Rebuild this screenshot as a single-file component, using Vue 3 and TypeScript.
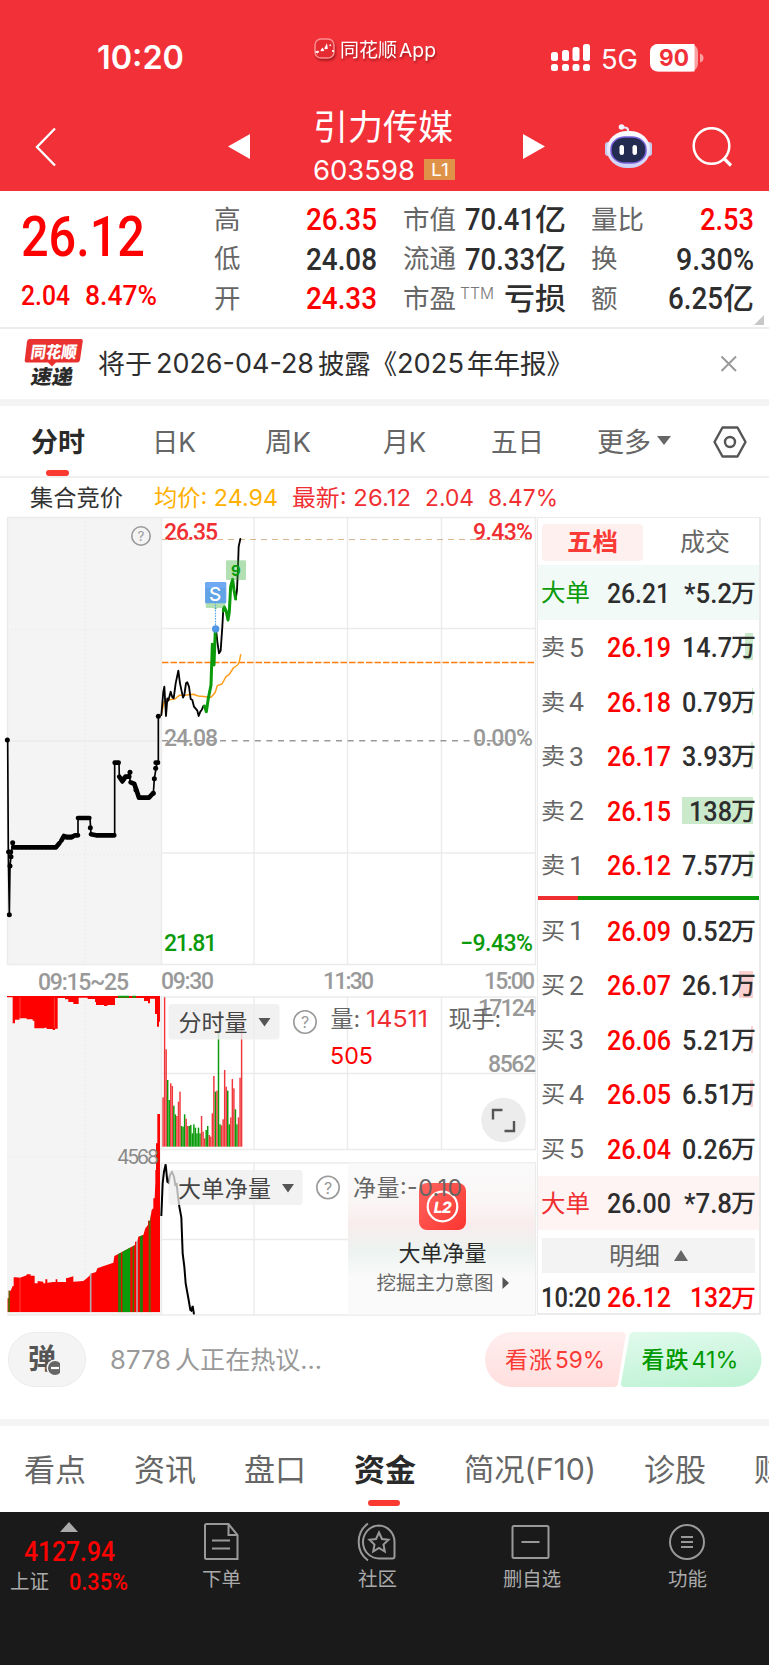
<script setup lang="ts">
import { h } from 'vue'

interface FitProps { t: string; w: number | string; s: number | string }

// One line of text set to an exact advance width, centred on its box.
const Fit = (p: FitProps) =>
  h('svg', { class: 'fit', width: p.w, height: p.s }, [
    h('text', { x: 0, y: Number(p.s) * 0.87, 'font-size': p.s, textLength: p.w, lengthAdjust: 'spacingAndGlyphs' }, p.t),
  ])
Fit.props = ['t', 'w', 's']

const quotes = [
  [{ l: '高', v: '26.35', w: 71, up: true }, { l: '市值', v: '70.41', w: 70, u: '亿', uw: 31 }, { l: '量比', v: '2.53', w: 54, up: true }],
  [{ l: '低', v: '24.08', w: 71 }, { l: '流通', v: '70.33', w: 70, u: '亿', uw: 31 }, { l: '换', v: '9.30%', w: 78 }],
  [{ l: '开', v: '24.33', w: 71, up: true }, { l: '市盈', v: '', w: 0, u: '亏损', uw: 62, ttm: true }, { l: '额', v: '6.25', w: 55, u: '亿', uw: 31 }],
] as { l: string; v: string; w: number; up?: boolean; u?: string; uw?: number; ttm?: boolean }[][]

const asks = [
  { n: '5', p: '26.19', q: '14.7', b: 8 },
  { n: '4', p: '26.18', q: '0.79', b: 1 },
  { n: '3', p: '26.17', q: '3.93', b: 2 },
  { n: '2', p: '26.15', q: '138', b: 71 },
  { n: '1', p: '26.12', q: '7.57', b: 4 },
]
const bids = [
  { n: '1', p: '26.09', q: '0.52', b: 0 },
  { n: '2', p: '26.07', q: '26.1', b: 14 },
  { n: '3', p: '26.06', q: '5.21', b: 2 },
  { n: '4', p: '26.05', q: '6.51', b: 3 },
  { n: '5', p: '26.04', q: '0.26', b: 0 },
]
const qw = (q: string) => (q.length === 4 ? 50 : 43)

const volume = (
  '352r 52r 208r 300g 360g 310r 318r 377g 403g 408r 365r 335r 438g 440g 403g 416r 438r 438g 435g 460g 433g 443g 460g 443g 460g 408r 455r 475r 450g 438g 465r 470r 400r 288r 335g 332r 155g 433g 436r 418r 270r 320r 332g 433g 412r 297r 325r 388g 433g 412r 293r 120r'
).split(' ').map((s, i) => ({ x: 487 + i * 4.62, y: parseInt(s), c: s.endsWith('g') ? '#0a9a0a' : '#f0383c' }))

const dots = [[22, 690], [28, 1214], [30, 1068], [33, 1040], [28, 1026], [38, 998], [271, 953], [463, 806], [467, 775], [475, 619], [390, 787], [460, 850], [408, 840]]
</script>

<template>
  <div class="page">
    <header class="top">
      <div class="status">
        <Fit class="clock" t="10:20" w="87" s="32.500" />
        <div class="brand">
          <svg width="22" height="22" viewBox="0 0 22 22"><rect x="1" y="1" width="19" height="19" rx="6" fill="#e52b31" stroke="#ff8d90" stroke-width="1.500" /><path d="M1.500 13.500l2 1 1-1.500M7 13l1.500-2 1 2M11 11l1.500-3 .5 3M15.500 7.500l1.500-.5M19 12v2" stroke="#fff" stroke-width="1.700" fill="none" /></svg>
          <Fit t="同花顺" w="57" s="19" /><Fit t="App" w="37" s="19" />
        </div>
        <svg class="signal" width="40" height="28" viewBox="0 0 40 28" fill="#fff"><rect x="0" y="8" width="7" height="9" rx="2.5" /><rect x="11" y="6" width="7" height="11" rx="2.5" /><rect x="21.500" y="3" width="7" height="14" rx="2.500" /><rect x="32" y="0" width="7" height="17" rx="2.500" /><rect x="0" y="20" width="7" height="7" rx="2.500" /><rect x="11" y="20" width="7" height="7" rx="2.500" /><rect x="21.500" y="20" width="7" height="7" rx="2.500" /><rect x="32" y="20" width="7" height="7" rx="2.500" /></svg>
        <Fit class="net" t="5G" w="37" s="27" />
        <svg class="battery" width="55" height="28" viewBox="0 0 55 28"><rect width="48" height="27.500" rx="8" fill="#f9a0a3" /><path d="M8 0h36.500v27.500H8a8 8 0 0 1-8-8V8a8 8 0 0 1 8-8z" fill="#fff" /><path d="M50 9.500q3.500 1 3.500 4.500t-3.500 4.500z" fill="#f9a0a3" /><text x="9" y="21.700" font-size="22.500" font-weight="700" textLength="30" lengthAdjust="spacingAndGlyphs" fill="#f03038">90</text></svg>
      </div>
      <div class="titlebar">
        <svg class="back" width="24" height="40" viewBox="0 0 24 40"><path d="M21 1.500L3 20l18 18.500" stroke="#fff" stroke-width="2.400" fill="none" /></svg>
        <svg class="prev" width="22" height="26"><path d="M0 12.500L22 0v25z" fill="#fff" /></svg>
        <div class="name">
          <Fit t="引力传媒" w="140" s="35" />
          <div class="code"><Fit t="603598" w="102" s="27.500" /><span class="lv"><Fit t="L1" w="18" s="17" /></span></div>
        </div>
        <svg class="next" width="22" height="26"><path d="M22 12.500L0 0v25z" fill="#fff" /></svg>
        <svg class="robot" width="48" height="46" viewBox="0 0 48 46">
          <defs><linearGradient id="rb" x2="0" y2="1"><stop offset="0" stop-color="#fff" /><stop offset="1" stop-color="#cdd0f6" /></linearGradient></defs>
          <path d="M23 9V7q0-2.500-4-2.500" stroke="#e8e9fb" stroke-width="2.200" fill="none" /><circle cx="16.500" cy="4" r="2.800" fill="#f2f3ff" />
          <rect x="0" y="19" width="6" height="14" rx="3" fill="#c6cbee" /><rect x="41" y="19" width="6" height="14" rx="3" fill="#c6cbee" />
          <rect x="2" y="8" width="43" height="37" rx="20" ry="18" fill="url(#rb)" />
          <rect x="6" y="14" width="35" height="26" rx="14" ry="12" fill="#232b50" stroke="#7a62dc" stroke-width="1.500" />
          <rect x="14.500" y="22" width="4.500" height="10" rx="2.200" fill="#fff" /><rect x="27.500" y="22" width="4.500" height="10" rx="2.200" fill="#fff" />
        </svg>
        <svg class="search" width="42" height="42" viewBox="0 0 42 42" fill="none" stroke="#fff" stroke-width="2.500"><circle cx="19.500" cy="19" r="17.800" /><path d="M31.500 31l7.500 7.500" stroke-width="3.200" /></svg>
      </div>
    </header>

    <section class="quote">
      <div class="last">
        <Fit class="din big" t="26.12" w="124" s="56" />
        <div class="chg"><Fit class="din" t="2.04" w="49" s="28.500" /><Fit class="din" t="8.47%" w="72" s="28.500" /></div>
      </div>
      <div class="qgrid">
        <template v-for="(row, i) in quotes" :key="i">
          <div v-for="c in row" :key="c.l" class="cell">
            <Fit class="lab" :t="c.l" :w="c.l.length * 26.5" s="26" />
            <Fit v-if="c.ttm" class="ttm" t="TTM" w="34" s="16" />
            <i class="grow"></i>
            <Fit v-if="c.v" class="din" :class="{ up: c.up }" :t="c.v" :w="c.w" s="31.500" />
            <Fit v-if="c.u" class="unit" :t="c.u" :w="c.uw!" s="30" />
          </div>
        </template>
      </div>
      <svg class="corner" width="10" height="10"><path d="M10 0v10H0z" fill="#c8c8c8" /></svg>
    </section>

    <section class="news">
      <svg width="60" height="50" viewBox="0 0 60 50">
        <path d="M5.500 1H57q2 0 1.800 2L56 22q-.5 2.500-3 2.500H32l-4 4-4-4H2.500Q.500 24.500.700 22.500L3 3.500Q3.400 1 5.500 1z" fill="#e9322f" />
        <text transform="translate(6 19.500) skewX(-8)" font-size="16.500" font-weight="900" textLength="46" lengthAdjust="spacingAndGlyphs" fill="#fff">同花顺</text>
        <text transform="translate(6 46) skewX(-10)" font-size="20" font-weight="900" textLength="42" lengthAdjust="spacingAndGlyphs" fill="#2a2a2a">速递</text>
      </svg>
      <Fit class="ntext a" t="将于" w="54" s="27" /><Fit class="ntext b" t="2026-04-28" w="158" s="26.500" /><Fit class="ntext b" t="披露《" w="79" s="27" /><Fit class="ntext" t="2025" w="67" s="26.500" /><Fit class="ntext c" t="年年报》" w="106" s="27" />
      <svg class="close" width="18" height="18" stroke="#999" stroke-width="2"><path d="M1.500 1.500l14.500 14.500M16 1.500L1.500 16" /></svg>
    </section>

    <nav class="tabs">
      <div class="on"><Fit t="分时" w="54" s="27.500" /><u></u></div>
      <Fit t="日K" w="44" s="27" /><Fit t="周K" w="46" s="27" /><Fit t="月K" w="43" s="27" /><Fit t="五日" w="53" s="27" />
      <span class="more"><Fit t="更多" w="54" s="27" /><svg width="14" height="9"><path d="M0 0h14L7 9z" fill="#666" /></svg></span>
      <svg width="36" height="34" viewBox="0 0 36 34" fill="none" stroke="#555" stroke-width="2.400" stroke-linejoin="round"><path d="M10.500 2.500h15L33.500 17l-8 14.500h-15L2.500 17z" /><circle cx="18" cy="17" r="5" /></svg>
    </nav>

    <div class="info">
      <Fit t="集合竞价" w="93" s="23" /><Fit class="avg" t="均价: 24.94" w="124" s="23" /><Fit class="red" t="最新: 26.12" w="119" s="23" /><Fit class="red" t="2.04" w="49" s="23" /><Fit class="red" t="8.47%" w="70" s="23" />
    </div>

    <main class="trade">
      <svg class="charts" width="537" height="806" viewBox="0 514 537 806">
        <defs>
          <clipPath id="auc"><path d="M22 997V955L26 955V932H32L38 918H41V892H48L60 893L80 886V883H92V887H104V910H113V903L130 905V910H136V898H142V908L160 906H167V898H172V906H198V895L205 893L220 889V905L250 903L262 893L270 886V882L288 876L292 865L320 855L340 848L343 828L355 822L405 795V785H412L415 770L430 765L436 745L444 735V722H450L455 690L460 685V655H464L466 610V570H468V490H472V402H480V997z" /></clipPath>
          <linearGradient id="ad" x2="0" y2="1"><stop offset="0" stop-color="#fafafa" /><stop offset=".25" stop-color="#faf6f6" /><stop offset=".4" stop-color="#f9eced" /><stop offset=".47" stop-color="#f3efef" /><stop offset=".58" stop-color="#edf3f0" /><stop offset=".75" stop-color="#f9faf9" /><stop offset="1" stop-color="#fafafa" /></linearGradient>
          <linearGradient id="l2" x2="1" y2="1"><stop offset="0" stop-color="#ff6560" /><stop offset="1" stop-color="#fb3530" /></linearGradient>
        </defs>
        <rect x="7" y="517" width="154" height="448" fill="#f4f4f4" /><rect x="7" y="996" width="154" height="319" fill="#f4f4f4" />
        <g stroke="#ebebeb" stroke-width="1.400" fill="none">
          <path d="M7 517.500H536M161.500 517V964.500H535.500V517M254 517v447M347.500 517v447M441.500 517v447M161 628.500H535M161 853H535M7 964.500h154M7.500 517v448" />
          <path d="M161.500 997H535.500V1149.500H161.500zM254 997v152M347.500 997v152M441.500 997v152M161 1073.500h374M161.500 1163H535.500V1315H161.500zM254 1163v152M161 1239.500h187M7 1315h154" />
          <path d="M7 629.500h154M7 854.500h154M85 517v448M85 996v319M7 1157h154" stroke-dasharray="1.500 2.500" /><path d="M7 741h154" />
        </g>
        <g fill="#999" class="dinax">
          <text x="161" y="988.500" textLength="53">09:30</text><text x="323" y="988.500" textLength="51">11:30</text><text x="484" y="988.500" textLength="51">15:00</text><text x="38" y="989.500" textLength="91">09:15~25</text>
        </g>
        <g class="dinax">
          <text x="164" y="539.500" textLength="54" fill="#f02f33">26.35</text><text x="473" y="539.500" textLength="60" fill="#f02f33">9.43%</text>
          <text x="164" y="745.500" textLength="54" fill="#999">24.08</text><text x="473" y="745.500" textLength="60" fill="#999">0.00%</text>
          <text x="164" y="951" textLength="53" fill="#0a9a0a">21.81</text><text x="460" y="951" textLength="73" fill="#0a9a0a">−9.43%</text>
        </g>
        <g fill="none">
          <path d="M162 539.500h371" stroke="#d9b48a" stroke-width="1.200" stroke-dasharray="6 5" />
          <path d="M162 740.700h371" stroke="#999" stroke-width="1.400" stroke-dasharray="6 5.600" />
          <path d="M162 662.500h373" stroke="#ff7d0a" stroke-width="1.700" stroke-dasharray="6.500 2" />
        </g>
        <g transform="translate(150 510) scale(.33333)" fill="none" stroke-linejoin="round" stroke-linecap="round">
          <path d="M34 615L42 575L52 570L75 567L88 556L110 555L130 553L145 558L183 562L195 548L202 527L216 522L228 500L238 493L250 474L263 465L268 455L272 434" stroke="#ff9d1a" stroke-width="4.500" />
          <path d="M34 615L40 545L43 530L48 618L52 565L55 572L62 545L67 562L71 565L77 520L85 482L90 520L99 563L103 555L108 520L112 517L117 530L122 567L127 570L132 590L142 602L146 618L151 605L155 600L160 588L165 590M198 358L202 395L207 430L212 422L217 350L220 295M257 267L261 240L264 170L266 110L271 87" stroke="#000" stroke-width="5.500" />
          <path d="M163 588L169 605L175 565L183 525L187 403L192 465L196 360M220 303L223 291L229 305L234 330L238 305L242 230L248 208L252 240L257 267" stroke="#0a9a0a" stroke-width="9" />
          <rect x="228" y="151" width="60" height="59" rx="4" fill="#42b142" opacity=".4" />
          <rect x="167" y="234" width="59" height="60" rx="4" fill="#42b142" opacity=".4" /><path d="M188 292h16l-8 8z" fill="#a8dca8" />
          <rect x="165" y="216" width="64" height="64" rx="4" fill="#4c94f0" opacity=".8" />
          <path d="M196.500 270v80" stroke="#4aa0e6" stroke-width="4" stroke-dasharray="1 7" /><circle cx="197" cy="357" r="11" fill="#4f97e6" />
        </g>
        <text x="231" y="576" font-size="15" font-weight="700" fill="#0a9a0a">9</text>
        <text x="209" y="600.500" font-size="19" font-weight="500" fill="#fff">S</text>
        <g transform="translate(0 510) scale(.33333)" fill="none" stroke="#000" stroke-linejoin="round" stroke-linecap="round">
          <path stroke-width="5" d="M23 690L25 1028L28 1214L30 1068L33 1040L38 998V1012H170L192 976L234 976V924H270L273 973L285 976H344V758H357L358 800L367 818L390 787V815L403 822L415 862H447L460 850L463 806L471 758H475V619" />
          <path stroke-width="14" d="M40 1012H168L178 1000M184 992L192 978L200 982L215 982L224 976H234M234 924H268M273 973L288 976H343M344 758H356M358 800L367 814L376 800H388M392 817L403 822L410 842L417 863H447L457 852M467 758H474M25 1026H33" />
          <circle v-for="(d, i) in dots" :key="i" :cx="d[0]" :cy="d[1]" r="7.500" fill="#000" stroke="none" />
          <path d="M356 800H386L367 822z" fill="#000" stroke="none" />
        </g>
        <g transform="translate(0 980) scale(.33333)">
          <path d="M21 48H480V125H477V140H471V102H465V56H450V70H444V63H432V54H345V75H322V78H312V75H288V66H285V57H263V53H236V72H220V66H205V58H195V54H173V146H165V150H158V147H140V143H134V145H103V122H98V118H80V115H58V119H45V130H38V52H21z" fill="#f00" />
          <path d="M354 50h33M397 50h11" stroke="#0a9a0a" stroke-width="6" /><path d="M60 52v66M163 52v92" stroke="#ff5a5a" stroke-width="2" />
          <g clip-path="url(#auc)"><rect x="20" y="400" width="462" height="600" fill="#f00" />
            <path d="M27 400v600M400 400v600" stroke="#3a7a00" stroke-width="5" /><path d="M379 400v600" stroke="#0a9a0a" stroke-width="24" /><path d="M359 400v600M424 400v600" stroke="#247f0a" stroke-width="9" /><path d="M449 400v600" stroke="#4f6e0a" stroke-width="6" />
            <path d="M272 400v600M411 400v600" stroke="#b5aaaa" stroke-width="5" /><path d="M60 400v600" stroke="#ff5a5a" stroke-width="2" /></g>
          <rect v-for="(b, i) in volume" :key="i" :x="b.x" :y="b.y" width="4.400" :height="500 - b.y" :fill="b.c" />
          <path d="M484 708L488 610L492 575L497 553L502 605L506 608L510 585L516 576L522 590L526 615L530 612L534 650L538 680L544 712L548 820L553 860L557 910L566 960L571 990L574 992L578 978L582 1003" fill="none" stroke="#000" stroke-width="6" />
        </g>
        <text x="117" y="1164" font-size="19.500" fill="#888" textLength="42">4568</text>
        <g fill="#999" class="dinax"><text x="478" y="1016" textLength="58">17124</text><text x="488" y="1071.500" textLength="48">8562</text></g>

        <rect x="168.500" y="1004" width="111" height="35.500" rx="3" fill="#eee" opacity=".8" /><rect x="168.500" y="1170" width="134" height="35" rx="3" fill="#eee" opacity=".75" />
        <g font-size="23" fill="#444">
          <text x="178.500" y="1031" textLength="69">分时量</text><text x="178" y="1197" textLength="93">大单净量</text>
          <g fill="#666"><text x="330.500" y="1027">量:</text><text x="448.500" y="1027">现手:</text></g>
          <text x="366" y="1026.500" textLength="62" lengthAdjust="spacingAndGlyphs" fill="#f02f33">14511</text><text x="330" y="1063.500" textLength="43" lengthAdjust="spacingAndGlyphs" fill="#f00">505</text>
        </g>
        <path d="M258.500 1018h12l-6 8.500zM282 1184h12l-6 8.500z" fill="#555" />
        <g fill="none" stroke="#999" stroke-width="1.600"><circle cx="305" cy="1022" r="11.200" /><circle cx="328" cy="1187.500" r="11.200" /><circle cx="141" cy="536" r="9.200" /></g>
        <g fill="#999" text-anchor="middle" font-size="16"><text x="305" y="1028">?</text><text x="328" y="1193.500">?</text><text x="141" y="541" font-size="13.500">?</text></g>
        <circle cx="503.500" cy="1120" r="22.300" fill="#ececec" /><path d="M493 1119.500V1110h9.500M504.500 1131H514v-10" fill="none" stroke="#555" stroke-width="2.400" />

        <rect x="348" y="1163.500" width="187" height="151" fill="url(#ad)" />
        <rect x="419" y="1183" width="47" height="47" rx="8" fill="url(#l2)" /><circle cx="442.500" cy="1206.500" r="14.800" fill="none" stroke="#fff" stroke-width="2.200" />
        <text transform="translate(433 1212.500) skewX(-10)" font-size="15.500" font-weight="800" fill="#fff" textLength="18">L2</text>
        <text x="353" y="1196" font-size="23" fill="#666" textLength="109">净量:-0.10</text>
        <text x="398.500" y="1261" font-size="22" fill="#2a2a2a" textLength="88">大单净量</text>
        <text x="376.500" y="1290" font-size="19.500" fill="#666" textLength="117">挖掘主力意图</text><path d="M502.500 1277l6.500 6-6.500 6z" fill="#555" />
      </svg>

      <aside class="book">
        <div class="btabs"><span class="sel"><Fit t="五档" w="51" s="25.500" /></span><span><Fit t="成交" w="50" s="25" /></span></div>
        <div class="lvl large ask"><Fit class="l" t="大单" w="49" s="24" /><Fit class="din d" t="26.21" w="63" s="27.500" /><span class="q d"><Fit class="din" t="*5.2" w="48" s="27.500" /><Fit class="wan" t="万" w="25" s="25" /></span></div>
        <div v-for="r in asks" :key="r.p" class="lvl sell"><span class="l"><Fit t="卖" w="24" s="23" /><Fit class="din n" :t="r.n" w="15" s="26" /></span><Fit class="din up" :t="r.p" w="64" s="27.500" /><span class="q d"><b :style="{ width: r.b + 'px' }"></b><Fit class="din" :t="r.q" :w="qw(r.q)" s="27.500" /><Fit class="wan" t="万" w="25" s="25" /></span></div>
        <div class="ratio"><i></i></div>
        <div v-for="r in bids" :key="r.p" class="lvl buy"><span class="l"><Fit t="买" w="24" s="23" /><Fit class="din n" :t="r.n" w="15" s="26" /></span><Fit class="din up" :t="r.p" w="64" s="27.500" /><span class="q d"><b :style="{ width: r.b + 'px' }"></b><Fit class="din" :t="r.q" :w="qw(r.q)" s="27.500" /><Fit class="wan" t="万" w="25" s="25" /></span></div>
        <div class="lvl large bid"><Fit class="l" t="大单" w="49" s="24" /><Fit class="din d" t="26.00" w="64" s="27.500" /><span class="q d"><Fit class="din" t="*7.8" w="48" s="27.500" /><Fit class="wan" t="万" w="25" s="25" /></span></div>
        <div class="detail"><Fit t="明细" w="51" s="25" /><svg width="14" height="11"><path d="M7 0l7 11H0z" fill="#666" /></svg></div>
        <div class="lvl tick"><Fit class="din d" t="10:20" w="60" s="27.500" /><Fit class="din up" t="26.12" w="64" s="27.500" /><span class="q up"><Fit class="din" t="132" w="42" s="27.500" /><Fit class="wan" t="万" w="25" s="25" /></span></div>
      </aside>
    </main>

    <section class="talk">
      <div class="danmu"><svg width="40" height="36" viewBox="0 0 40 36"><text x="8" y="27" font-size="28" font-weight="700" fill="#555">弹</text><circle cx="35" cy="26" r="8.500" fill="#f4f4f4" /><circle cx="35" cy="26" r="7" fill="#666" /><path d="M31 26h8" stroke="#fff" stroke-width="2.200" /></svg></div>
      <Fit class="hint" t="8778" w="61" s="25" /><Fit class="hint h2" t="人正在热议..." w="147" s="25" />
      <svg class="vote" width="278" height="56" viewBox="0 0 278 56">
        <defs><linearGradient id="vr" x2="0" y2="1"><stop offset="0" stop-color="#ffeeee" /><stop offset="1" stop-color="#ffdfde" /></linearGradient><linearGradient id="vg" x1=".2" x2=".5" y2="1"><stop offset="0" stop-color="#e0faeb" /><stop offset="1" stop-color="#c0f3d6" /></linearGradient></defs>
        <path d="M27.500 0H136q5 0 4.500 4L133 51.500q-.7 3.500-4.500 3.500H27.500a27.500 27.500 0 0 1 0-55z" fill="url(#vr)" />
        <path d="M249 0H149q-4 0-4.700 4L136 51q-.6 4 3.500 4H249a27.500 27.500 0 0 0 0-55z" fill="url(#vg)" />
        <g font-size="23"><g fill="#fa3a35"><text x="20" y="36" textLength="47">看涨</text><text x="70" y="36" textLength="50" lengthAdjust="spacingAndGlyphs">59%</text></g><g fill="#009a00" font-weight="500"><text x="156.500" y="36" textLength="47">看跌</text><text x="206.500" y="36" textLength="47" lengthAdjust="spacingAndGlyphs" font-weight="400">41%</text></g></g>
      </svg>
    </section>

    <nav class="sub">
      <Fit t="看点" w="62" s="31" /><Fit t="资讯" w="62" s="31" /><Fit t="盘口" w="62" s="31" /><div class="on"><Fit t="资金" w="62" s="31" /><u></u></div><Fit t="简况(F10)" w="132" s="30" /><Fit t="诊股" w="62" s="31" /><Fit t="财务" w="62" s="31" />
    </nav>

    <footer class="dock">
      <div class="index">
        <svg width="18" height="10"><path d="M9 0l9 10H0z" fill="#aaa" /></svg>
        <Fit class="din up" t="4127.94" w="91" s="28" />
        <div><Fit t="上证" w="39" s="20" /><Fit class="din up" t="0.35%" w="59" s="23" /></div>
      </div>
      <div class="item i1"><svg width="36" height="40" viewBox="0 0 36 40"><path d="M3.500 2h22l9 11v24H3.500q-1.500 0-1.500-1.500V3.500Q2 2 3.500 2zM25.500 2v11h9M9 18.500h18M9 26.500h18" /></svg><Fit t="下单" w="39" s="19.500" /></div>
      <div class="item i2"><svg width="42" height="40" viewBox="0 0 42 40"><path d="M13 1.500A23 23 0 0 0 13 38.500M24 3.500a16 16.500 0 0 0 0 33h13.500q2 0 2-2V20A16 16.500 0 0 0 24 3.500z" /><path d="M24 10.500l3 6.500 6.500.8-5 4.700 1.300 7-5.800-3.500-5.800 3.500 1.300-7-5-4.700 6.500-.8z" /></svg><Fit t="社区" w="39" s="19.500" /></div>
      <div class="item i3"><svg width="42" height="40" viewBox="0 0 42 40"><rect x="2.500" y="4" width="36" height="32" rx="1.500" /><path d="M11.500 20h18" /></svg><Fit t="删自选" w="58" s="19.500" /></div>
      <div class="item i4"><svg width="40" height="40" viewBox="0 0 40 40"><circle cx="20" cy="20" r="17" /><path d="M14 15h12M14 20h12M14 25h12" /></svg><Fit t="功能" w="39" s="19.500" /></div>
    </footer>
  </div>
</template>

<style>
body { margin: 0; background: #fff; }
.fit { display: block; flex: none; overflow: visible; fill: currentColor; }
</style>
<style scoped>
.page { width: 769px; height: 1665px; overflow: hidden; background: #fff; color: #666; font-family: Inter, "Noto Sans CJK SC", sans-serif; }
.page svg { flex: none; display: block; }
.din { font-family: Roboto, "Noto Sans CJK SC", sans-serif; font-weight: 500; }
.up { color: #f00; }
.d { color: #2e2e2e; }
.top { height: 191px; background: #f23038; color: #fff; }
.status { height: 106px; display: flex; align-items: flex-start; }
.clock { margin: 41px 0 0 97px; font-weight: 600; }
.brand { display: flex; align-items: center; width: 237px; margin: 38px 0 0 130px; filter: drop-shadow(1px 2px 1px rgba(90,0,0,.5)); }
.brand .fit { margin-left: 4px; }
.brand .fit + .fit { margin-left: 2px; }
.signal { margin-top: 44px; }
.net { margin: 44.5px 0 0 10px; }
.battery { margin: 43.5px 0 0 12px; }
.titlebar { display: flex; height: 85px; }
.back { margin: 21px 0 0 34px; }
.prev { margin: 28px 0 0 170px; }
.name { width: 145px; margin: 4px 0 0 63px; }
.code { display: flex; align-items: center; margin-top: 10.5px; }
.lv { display: flex; justify-content: center; align-items: center; width: 31px; height: 21px; margin-left: 9px; background: #df9348; }
.next { margin: 28px 0 0 65px; }
.robot { margin: 17px 0 0 60px; }
.search { margin: 21px 0 0 39px; }
.quote { display: flex; height: 136px; border-bottom: 2px solid #ececec; }
.last { width: 214px; color: #f00; padding-left: 20.5px; box-sizing: border-box; }
.big { margin-top: 16px; }
.chg { display: flex; gap: 15px; margin-top: 17px; }
.qgrid { display: grid; grid-template-columns: 163px 163px 163px; grid-template-rows: repeat(3, 39.5px); column-gap: 25.5px; margin-top: 8px; }
.cell { display: flex; align-items: center; color: #2e2e2e; }
.cell .up { color: #f00; }
.lab { color: #666; }
.ttm { color: #777; margin: -10px 0 0 4px; font-weight: 300; }
.grow { flex: 1; }
.unit { font-weight: 500; }
.corner { margin: 124px 0 0 0; }
.news { display: flex; align-items: center; height: 70px; padding-left: 24px; border-bottom: 7px solid #f4f4f4; color: #2e2e2e; }
.news > svg:first-child { margin-top: -3px; }
.ntext { margin-top: -2px; }
.ntext.a { margin-left: 14px; }
.ntext.b { margin-left: 4px; }
.ntext.c { margin-left: 3px; }
.close { margin: -1px 31px 0 auto; }
.tabs { display: grid; grid-template-columns: 121px 113px 117.5px 108.5px 106px 115px 60px; padding-left: 31px; height: 70px; align-items: center; border-bottom: 2px solid #f0f0f0; }
.tabs > * { margin-top: 1px; }
.on { color: #2a2a2a; font-weight: 600; }
.tabs .on { height: 70px; margin: 0; display: flex; flex-direction: column; align-items: flex-start; }
.tabs .on .fit { margin-top: 22px; }
u { display: block; background: #fa3a30; border-radius: 3px; height: 6px; }
.tabs u { width: 23px; margin: 14.5px 0 0 15px; }
.more { display: flex; align-items: center; gap: 6px; }
.more svg:last-child { margin-top: -2px; }
.info { display: flex; height: 36px; align-items: center; padding: 3px 0 0 30px; box-sizing: border-box; color: #333; }
.avg { color: #ffb000; margin-left: 30.5px; }
.red { color: #f02f33; margin-left: 14px; }
.trade { display: flex; height: 806px; }
.dinax { font-family: Roboto, sans-serif; font-size: 23px; font-weight: 500; }
.book { width: 221px; height: 795px; margin-top: 3px; border: 1.5px solid #ebebeb; border-width: 1px 2px 2px 1px; box-sizing: content-box; }
.btabs { display: flex; height: 47px; padding: 6px 0 0 4px; box-sizing: border-box; }
.btabs span { width: 101px; height: 37px; border-radius: 4px; display: flex; align-items: center; justify-content: center; padding-bottom: 2px; box-sizing: border-box; }
.btabs span + span { margin-left: 11px; }
.btabs .sel { background: #fff0f0; color: #fa3a35; font-weight: 700; }
.lvl { display: grid; grid-template-columns: 66px 66px 1fr; align-items: center; height: 54.5px; padding: 0 3px 0 3px; box-sizing: border-box; }
.l { display: flex; color: #666; align-items: center; }
.n { font-weight: 400; margin-left: 4px; }
.q { display: flex; justify-content: flex-end; align-items: center; position: relative; height: 27px; }
.q .fit { position: relative; }
.q .wan { margin-left: -1px; }
.wan { font-weight: 500; }
.q b { position: absolute; right: 3px; top: 0; height: 27px; }
.sell b { background: #cbeacb; }
.buy b { background: #fbd0d1; }
.large.ask { background: #f1faf7; }
.large.ask .l { color: #0a9a0a; }
.large.bid { background: #fff4f4; }
.large.bid .l { color: #f02f33; }
.ratio { height: 4px; margin: 3.5px 0; background: #0a9a0a; }
.ratio i { display: block; width: 40px; height: 4px; background: #f02f33; }
.detail { display: flex; align-items: center; justify-content: center; gap: 14px; width: 213px; height: 35px; margin: 8px 0 0 4px; background: #f3f3f3; }
.tick { height: 45px; padding-top: 3px; }
.talk { display: flex; height: 87px; padding: 12px 0 0 8px; box-sizing: content-box; border-bottom: 7px solid #f4f4f4; }
.danmu { border: 1.5px solid #ececec; border-radius: 27px; background: #f4f4f4; display: flex; align-items: center; padding-left: 11px; box-sizing: border-box; height: 55px; width: 78px; }
.hint { color: #999; margin: 15px 0 0 23.5px; }
.hint.h2 { margin-left: 4px; }
.vote { margin-left: 163px; }
.sub { display: flex; height: 86px; padding-left: 24px; white-space: nowrap; }
.sub > .fit { margin: 28px 48px 0 0; }
.sub .on { margin-right: 48px; padding-top: 28px; }
.sub u { width: 32px; margin: 15px 0 0 14px; }
.dock { display: flex; height: 153px; background: #1a1a1a; color: #aaa; }
.index { width: 138px; padding-top: 10px; display: flex; flex-direction: column; align-items: center; }
.index > .fit { margin-top: 5px; }
.index div { display: flex; align-items: center; gap: 20px; margin-top: 5px; }
.item { display: flex; flex-direction: column; align-items: center; padding-top: 10px; }
.item > .fit { margin-top: 7px; }
.item svg:first-child { fill: none; stroke: #999; stroke-width: 2; margin-left: -2px; }
.i1 { margin-left: 64px; }
.i2 { margin-left: 116px; }
.i3 { margin-left: 106px; }
.i4 { margin-left: 107px; }
</style>
